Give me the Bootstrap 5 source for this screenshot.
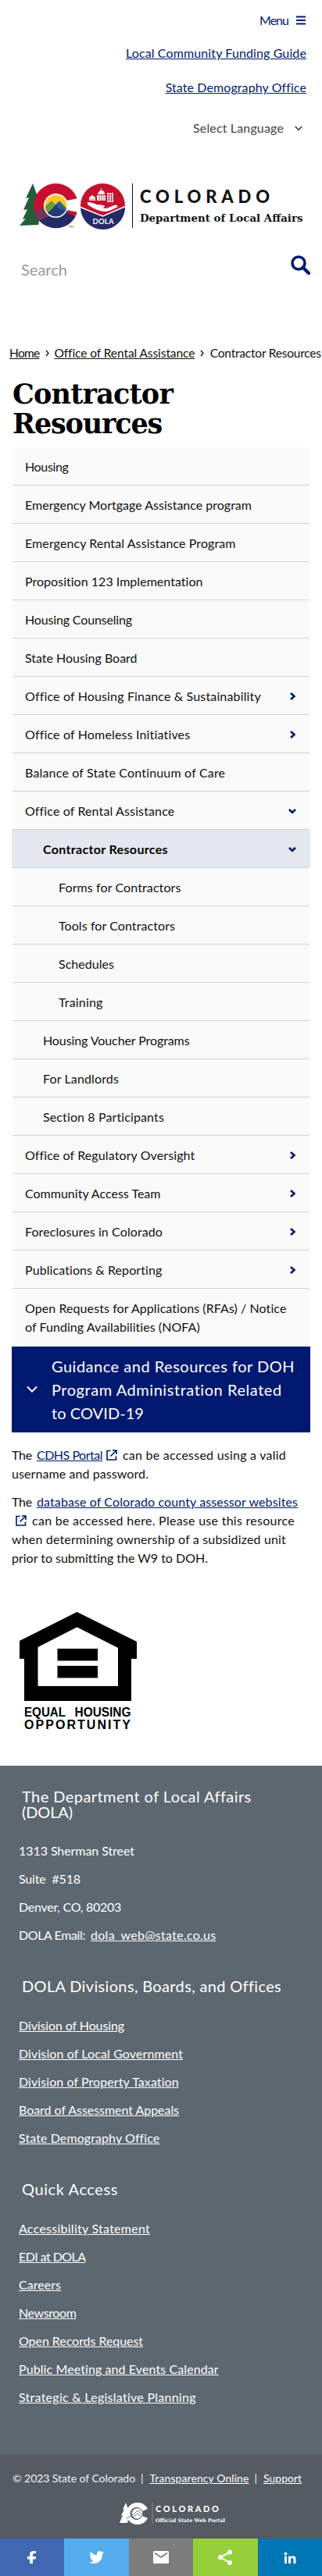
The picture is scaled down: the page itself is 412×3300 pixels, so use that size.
<!DOCTYPE html>
<html lang="en">
<head>
<meta charset="utf-8">
<meta name="viewport" content="width=device-width, initial-scale=1">
<title>Contractor Resources | Department of Local Affairs</title>
<link href="https://cdn.jsdelivr.net/npm/bootstrap@5.3.0/dist/css/bootstrap.min.css" rel="stylesheet">
<style>
:root{--navy:#001970}
body{font-family:"Trebuchet MS",Lato,"Open Sans",sans-serif;font-size:16px;line-height:24px;color:#111;background:#fff;overflow-x:hidden}
svg{display:block;flex:none;overflow:visible}
[data-w]{display:inline-block;white-space:pre;vertical-align:top}
a{color:var(--navy)}
.util{height:214px;padding:14px 20px 0 0}
.util-menu{gap:10px}
.util-menu svg{margin-right:1px}
.util-guide{margin-top:18px}
.util-demo{margin-top:20px}
.util-lang{color:#444;margin-top:28px;padding-right:5px;gap:14px}
.brand{height:84px;padding:21px 0 0 25px}
.finder{height:122px;padding:29px 15px 0 27px;font-size:20px;color:#999}
.finder span{margin-top:6px}
.crumbs{height:54px;padding:20px 0 0 12px;font-size:15.5px}
.crumbs a{color:#111}
h1.page-title{font-family:"Museo Slab","DejaVu Serif",serif;font-weight:700;font-size:35px;line-height:38px;color:#000;margin:0;padding:12px 0 0 16px;height:99px}
.side{margin:0 16px;background:#fafafa}
.side .list-group-item{background:transparent;border:0;border-bottom:1px solid #d3d3d3;border-radius:0;height:49px;padding:13px 17px 0 16px;color:#111}
.side .list-group-item svg{margin-top:7px}
.side .lvl2{padding-left:39px}
.side .lvl3{padding-left:59px}
.side .here{background:#e4e7ed;font-weight:700;color:#000;box-shadow:-1px 0 #e4e7ed,1px 0 #e4e7ed}
.side .list-group-item:last-child{height:74px;border:0}
.drop{margin:0 15px;background:var(--navy);color:#fff;height:110px;padding:10px 0 0 19px;gap:18px;font:20px/30px Lato,sans-serif}
.drop svg{margin-top:40px}
.prose{padding:17px 15px 0;height:226px}
.prose p{margin-bottom:12px}
.prose span>a{margin-left:6px}
.prose .ext{margin:5px 7px 0 5px}
.housing{height:201px;padding:4px 0 0 25px}
.foot{background:#5c6770;color:#fff;height:882px;padding:29px 24px 0}
.foot a,.legal a{color:#fff}
.foot h2{font:20px/20px Lato,sans-serif;margin:0 0 0 4px}
.foot .stack{margin-top:23px}
.foot .stack+h2{margin-top:37px}
.foot .stack:first-of-type{margin-top:22px}
.foot .stack>*{height:36px;padding-top:6px}
.mailto{margin-left:7px}
.legal{background:#555a63;color:#f1f3f5;height:108px;font-size:14px;padding-top:19px}
.legal .bar{margin:0 8px 0 7px}
.legal svg{margin:19px 0 0 153px}
.share div{height:48px}
.s-fb{background:#4267b2}.s-tw{background:#55acee}.s-ml{background:#7d7d7d}.s-sh{background:#95d03a}.s-li{background:#0077b5}
</style>
</head>
<body>
<header>
  <div class="util d-flex flex-column align-items-end">
    <div class="util-menu d-flex align-items-center"><a href="#" class="text-decoration-none" data-w="37">Menu</a>
      <svg width="12" height="12"><path d="M0 1.500h12M0 6h12M0 10.500h12" stroke="#001970" stroke-width="2"/></svg></div>
    <a href="#" class="util-guide" data-w="231">Local Community Funding Guide</a>
    <a href="#" class="util-demo" data-w="179.500">State Demography Office</a>
    <div class="util-lang d-flex align-items-center"><span data-w="116">Select Language</span>
      <svg width="10" height="7" fill="none" stroke="#444" stroke-width="1.800"><path d="M.8 1 5 5.500 9.200 1"/></svg></div>
  </div>
  <div class="brand">
    <svg width="368" height="60" viewBox="0 0 368 60">
      <path d="M17 0 8 19l4-1-7 16 5-1-6 13 4-1-8 9 24-1 5-20z" fill="#245d38"/>
      <circle cx="46.500" cy="28.500" r="28.500" fill="#c8102e"/>
      <path d="M25 47.500 40 27l31.500 15.500A28.500 28.500 0 0 1 25 47.500z" fill="#242a66"/>
      <path d="M19 36 36 30l3 12-14 5.500q-4-4-6-11.500z" fill="#733457"/>
      <path d="M60 22 75 19v18l-15-3z" fill="#fff"/>
      <circle cx="46.500" cy="28.500" r="15.500" fill="#fff"/>
      <clipPath id="sun"><circle cx="46.500" cy="28.500" r="13.800"/></clipPath>
      <g clip-path="url(#sun)"><path d="M32 14h29v29H32z" fill="#ffc72c"/><path d="m32 30 9-8 5 5 5-5 10 10v12H32z" fill="#6d9b35"/><path d="m36 40 10-13 5-4 11 12v8H32z" fill="#27628e"/><path d="m33 40 14-12 5 5 9 2v10H35z" fill="#263a78"/></g>
      <path d="m63 54.500h2.500m-1.200 0v2m2.200 0v-2l1.200 1.500 1.200-1.500v2" stroke="#444" stroke-width=".5" fill="none"/>
      <circle cx="106.500" cy="28.500" r="28.500" fill="#c8102e"/>
      <path d="m78 31 28.500 11L135 30a28.500 28.500 0 0 1-57 1z" fill="#242a66"/>
      <path d="m78 30.500 28.500 11.500L135 29.500" fill="none" stroke="#fff" stroke-width="1.500"/>
      <path d="M87 24c6 0 8 2 12 3l9 1c2 1 0 3-2 3l-7-1 12 2 10-4c4-1 6 1 3 3l-9 4c-8 3-18-1-28-8z" fill="#fff"/>
      <path d="M89 22v-4l4-3 4 3v4zM99 22v-7h11v7zM100 14q1-5 5-5t4 5zM112 12h8v12h-8z" fill="#fff"/>
      <path d="M104.500 6v4" stroke="#fff"/><path d="M112 15h8m-8 3h8m-8 3h8m-5.500-9v12m3-12v12M102 15v7m3-7v7m3-7v7M91 19v3m3-3v3" stroke="#c8102e" stroke-width=".8"/>
      <text x="93.500" y="51.500" font-family="Lato" font-weight="700" font-size="9.500" fill="#fff" textLength="27">DOLA</text>
      <path d="M144.500 0v57" stroke="#111" stroke-width="1"/>
      <text x="154" y="24.500" font-family="Lato" font-weight="900" font-size="22" fill="#111" textLength="166">COLORADO</text>
      <text x="154" y="49" font-family="DejaVu Serif" font-weight="700" font-size="13" fill="#111" textLength="208.500" lengthAdjust="spacingAndGlyphs">Department of Local Affairs</text>
    </svg>
  </div>
  <div class="finder d-flex justify-content-between align-items-start">
    <span data-w="59">Search</span>
    <svg width="25" height="25" fill="none" stroke="#001970"><circle cx="10" cy="10" r="8" stroke-width="3.600"/><path d="m15.500 15.500 7.500 7.500" stroke-width="4.200" stroke-linecap="round"/></svg>
  </div>
</header>
<nav class="crumbs d-flex"><a href="#" data-w="38.500">Home</a><svg width="19" height="24" fill="none" stroke="#111" stroke-width="1.300"><path d="m8 9 3 3.500L8 16"/></svg><a href="#" data-w="179">Office of Rental Assistance</a><svg width="19.500" height="24" fill="none" stroke="#111" stroke-width="1.300"><path d="m8 9 3 3.500L8 16"/></svg><span data-w="142">Contractor Resources</span></nav>
<h1 class="page-title"><span data-w="205">Contractor</span><br><span data-w="191">Resources</span></h1>
<nav class="side list-group" id="side"></nav>
<main>
  <div class="drop d-flex"><svg width="14" height="10" fill="none" stroke="#fff" stroke-width="2"><path d="m1 1.500 6 6 6-6"/></svg>
    <div><span data-w="311">Guidance and Resources for DOH</span><br><span data-w="295">Program Administration Related</span><br><span data-w="118">to COVID-19</span></div></div>
  <div class="prose">
    <p><span class="d-flex"><span data-w="26">The</span><a href="#" data-w="84">CDHS Portal</a><svg class="ext" width="14" height="14" viewBox="0 0 14 14" fill="none" stroke="#001970" stroke-width="1.600"><path d="M5.500 1.500H1v11.500h11.500V8.500M8 1h5v5M13 1 5.500 8.500"/></svg><span data-w="209">can be accessed using a valid</span></span><span data-w="175">username and password.</span></p>
    <p class="mb-0"><span class="d-flex"><span data-w="26">The</span><a href="#" data-w="334">database of Colorado county assessor websites</a></span><span class="d-flex"><svg class="ext" width="14" height="14" viewBox="0 0 14 14" fill="none" stroke="#001970" stroke-width="1.600"><path d="M5.500 1.500H1v11.500h11.500V8.500M8 1h5v5M13 1 5.500 8.500"/></svg><span data-w="336">can be accessed here. Please use this resource</span></span><span data-w="351">when determining ownership of a subsidized unit</span><br><span data-w="250.500">prior to submitting the W9 to DOH.</span></p>
  </div>
  <div class="housing">
    <svg width="150" height="152"><path fill-rule="evenodd" d="M73.500 0 150 38v22h-7v54H6V60H0V37zM73.500 19.500 23.500 45v50H126V46z"/><path d="M48.500 47h51.500v15.500H48.500zM48.500 69h51.500v15.500H48.500z"/>
    <g font-family="Liberation Sans" font-weight="700" font-size="16"><text x="6" y="134" textLength="53" lengthAdjust="spacingAndGlyphs">EQUAL</text><text x="70.500" y="134" textLength="72" lengthAdjust="spacingAndGlyphs">HOUSING</text><text x="6" y="149.500" textLength="136">OPPORTUNITY</text></g></svg>
  </div>
</main>
<footer>
  <div class="foot">
    <h2><span data-w="293">The Department of Local Affairs</span><br><span data-w="65">(DOLA)</span></h2>
    <div class="stack"><div><span data-w="148">1313 Sherman Street</span></div><div><span data-w="79">Suite  #518</span></div><div><span data-w="131">Denver, CO, 80203</span></div><div><span data-w="85">DOLA Email:</span><a href="#" class="mailto" data-w="160.500">dola_web@state.co.us</a></div></div>
    <h2><span data-w="331">DOLA Divisions, Boards, and Offices</span></h2>
    <div class="stack"><div><a href="#" data-w="135">Division of Housing</a></div><div><a href="#" data-w="210">Division of Local Government</a></div><div><a href="#" data-w="205">Division of Property Taxation</a></div><div><a href="#" data-w="205">Board of Assessment Appeals</a></div><div><a href="#" data-w="179.500">State Demography Office</a></div></div>
    <h2><span data-w="123">Quick Access</span></h2>
    <div class="stack"><div><a href="#" data-w="168">Accessibility Statement</a></div><div><a href="#" data-w="85.500">EDI at DOLA</a></div><div><a href="#" data-w="54">Careers</a></div><div><a href="#" data-w="73.500">Newsroom</a></div><div><a href="#" data-w="159">Open Records Request</a></div><div><a href="#" data-w="256">Public Meeting and Events Calendar</a></div><div><a href="#" data-w="227">Strategic &amp; Legislative Planning</a></div></div>
  </div>
  <div class="legal">
    <div class="d-flex ps-3"><span data-w="157">© 2023 State of Colorado</span><span class="bar">|</span><a href="#" data-w="127">Transparency Online</a><span class="bar">|</span><a href="#" data-w="49">Support</a></div>
    <svg width="136" height="29" viewBox="0 0 136 29"><path d="M8 0 4 9l2-.5-4 8 2-.5L0 26h10l6-24-5 6z" fill="#fff"/><path d="M36 8A14.500 14 0 1 0 36 20l-7-3a8 8 0 1 1 0-6z" fill="#fff"/><circle cx="22.500" cy="14" r="7" fill="#fff" stroke="#777b82"/><path d="m9 20 9-5 5-5 6 6M18 18l5-4 4 4" fill="none" stroke="#777b82"/><path d="M42 0v27" stroke="#8c9096"/><text x="46" y="12" font-family="Lato" font-weight="900" font-size="11" fill="#fff" textLength="81">COLORADO</text><text x="46" y="24.500" font-family="DejaVu Serif" font-weight="700" font-size="6.500" fill="#fff" textLength="89" lengthAdjust="spacingAndGlyphs">Official State Web Portal</text></svg>
  </div>
  <div class="share row g-0">
    <div class="s-fb col d-flex justify-content-center"><svg width="24" height="48" fill="#fff"><path d="M17 16v3h-2q-2 0-2 2v2h4l-.6 3.500H13V32H9v-5.500H6V23h3v-2.500Q9 16 14 16z"/></svg></div>
    <div class="s-tw col d-flex justify-content-center"><svg width="20" height="48" viewBox="0 0 20 48" fill="#fff"><path d="m19 18-2 2c0 8-5 12-11 12q-3 0-5.500-1.500 3.500 0 5.500-1.700-3-.3-3.800-2.800h1.800Q1 25 1 22l1.800.5Q0 20 2 17q3 4 8 4.300-.6-4.800 3.600-5.300 1.600 0 3 1.200L19 16.500 17.500 18z"/></svg></div>
    <div class="s-ml col d-flex justify-content-center"><svg width="20" height="48"><rect y="16" width="20" height="16" rx="1.500" fill="#fff"/><path d="m2 18.500 8 5.500 8-5.500" fill="none" stroke="#7d7d7d" stroke-width="1.800"/></svg></div>
    <div class="s-sh col d-flex justify-content-center"><svg width="20" height="48" fill="#fff"><path d="M16 17.500 4 24l12 7" fill="none" stroke="#fff" stroke-width="2"/><circle cx="16" cy="17.500" r="3"/><circle cx="4" cy="24" r="3"/><circle cx="16" cy="31" r="3"/></svg></div>
    <div class="s-li col d-flex justify-content-center"><svg width="16" height="48" fill="#fff"><circle cx="2.500" cy="19.500" r="1.900"/><path d="M1 22.500h3V32H1zM6 22.500h3v1.300q1-1.600 3-1.600 3.500 0 3.500 4V32h-3v-5q0-2-1.600-2Q9 25 9 27v5H6z"/></svg></div>
  </div>
</footer>
<script>
/* [label, width, level, arrow] */
const items=[["Housing",55.5],["Emergency Mortgage Assistance program",290],["Emergency Rental Assistance Program",269.5],["Proposition 123 Implementation",228],["Housing Counseling",137],["State Housing Board",143.5],["Office of Housing Finance & Sustainability",301,1,"r"],["Office of Homeless Initiatives",211,1,"r"],["Balance of State Continuum of Care",256.5],["Office of Rental Assistance",190.5,1,"d"],["Contractor Resources",160,2,"d"],["Forms for Contractors",156.5,3],["Tools for Contractors",149,3],["Schedules",71,3],["Training",56.5,3],["Housing Voucher Programs",187.5,2],["For Landlords",97,2],["Section 8 Participants",155.5,2],["Office of Regulatory Oversight",216.5,1,"r"],["Community Access Team",173.5,1,"r"],["Foreclosures in Colorado",176,1,"r"],["Publications & Reporting",176,1,"r"]];
const arrow={r:'<path d="m3 1 4.500 4L3 9"/>',d:'<path d="m1 3 4 4 4-4"/>'};
document.getElementById("side").innerHTML=items.map(([t,w,l=1,a])=>`<a href="#" class="list-group-item d-flex justify-content-between align-items-start lvl${l}${t==="Contractor Resources"?" here":""}"><span data-w="${w}">${t.replace("&","&amp;")}</span>${a?`<svg width="10" height="10" fill="none" stroke="#001970" stroke-width="2.6">${arrow[a]}</svg>`:""}</a>`).join("")+'<a href="#" class="list-group-item"><span data-w="335">Open Requests for Applications (RFAs) / Notice</span><br><span data-w="224">of Funding Availabilities (NOFA)</span></a>';
document.querySelectorAll("[data-w]").forEach(e=>{
  const w=e.getBoundingClientRect().width;
  e.style.letterSpacing=((e.dataset.w-w)/e.textContent.length).toFixed(3)+"px";
});
</script>
<script src="https://cdn.jsdelivr.net/npm/bootstrap@5.3.0/dist/js/bootstrap.bundle.min.js"></script>
</body>
</html>
